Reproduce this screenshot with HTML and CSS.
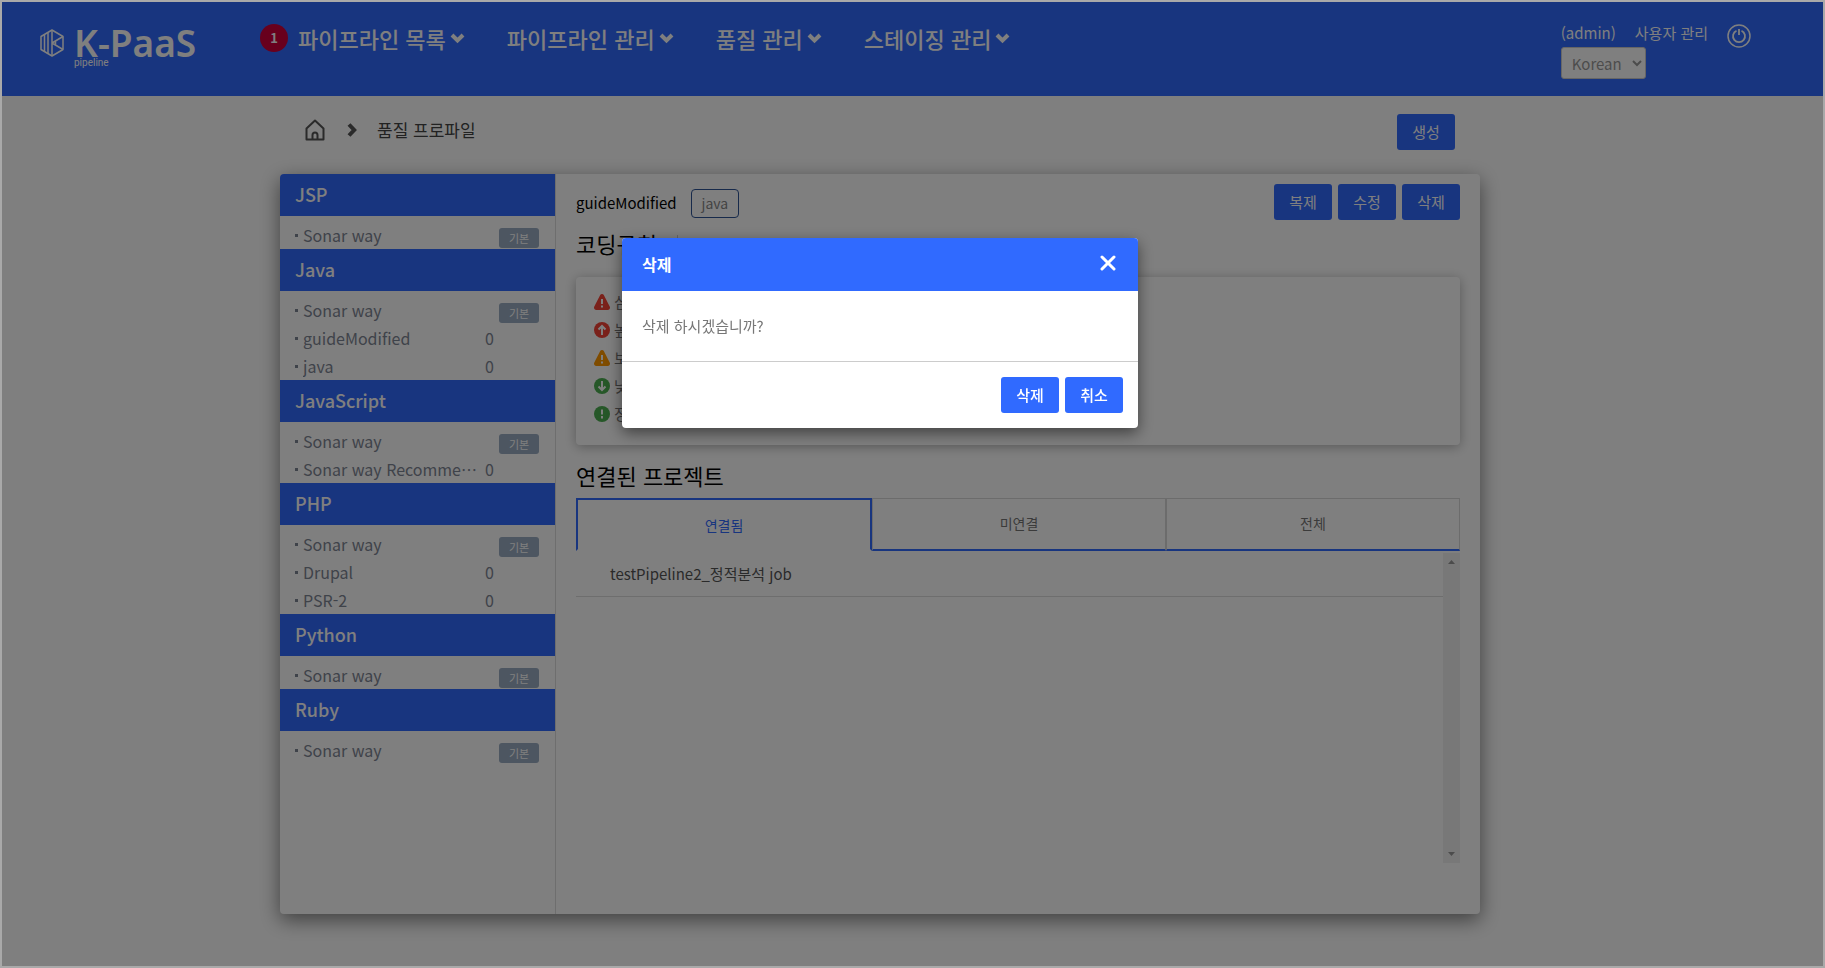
FILE: index.html
```html
<!DOCTYPE html>
<html lang="ko">
<head>
<meta charset="utf-8">
<title>K-PaaS pipeline - 품질 프로파일</title>
<link rel="stylesheet" href="styles.css">
</head>
<body>
<div class="page">
  <header class="header">
    <a class="logo" href="#" aria-label="K-PaaS pipeline">
      <svg class="logo-mark" viewBox="0 0 24 28" fill="none" stroke="currentColor" stroke-width="1.5" stroke-linejoin="round">
        <path d="M12 1 23 7.5v13L12 27 1 20.500v-13z"/>
        <path d="M4.500 5.800v16.600M8 3.800v20.600M12 1v26M12 14 23 7.500M12 14l11 6.500M15.500 12v4"/>
      </svg>
      <span class="logo-text"><span class="logo-name">K-PaaS</span><span class="logo-sub">pipeline</span></span>
    </a>
    <nav class="nav">
      <span class="count">1</span>
      <a class="nav-link" href="#">파이프라인 목록<svg class="caret" viewBox="0 0 15 12"><path d="M2 3 7.500 8.500 13 3"/></svg></a>
      <a class="nav-link" href="#">파이프라인 관리<svg class="caret" viewBox="0 0 15 12"><path d="M2 3 7.500 8.500 13 3"/></svg></a>
      <a class="nav-link" href="#">품질 관리<svg class="caret" viewBox="0 0 15 12"><path d="M2 3 7.500 8.500 13 3"/></svg></a>
      <a class="nav-link" href="#">스테이징 관리<svg class="caret" viewBox="0 0 15 12"><path d="M2 3 7.500 8.500 13 3"/></svg></a>
    </nav>
    <div class="user">
      <div class="user-row">
        <a href="#">(admin)</a>
        <a href="#">사용자 관리</a>
        <button class="power" type="button" aria-label="로그아웃">
          <svg viewBox="0 0 24 24" fill="none" stroke="currentColor" stroke-width="1.500"><circle cx="12" cy="12" r="11"/><path d="M9.500 6.700a6 6 0 1 0 5 0M12 5v6" stroke-width="1.800"/></svg>
        </button>
      </div>
      <select class="lang" aria-label="언어"><option>Korean</option><option>English</option></select>
    </div>
  </header>

  <main class="main">
    <div class="crumbs">
      <nav class="trail" aria-label="현재 위치">
        <a class="home" href="#" aria-label="홈"><svg viewBox="0 0 20 22" fill="none" stroke="currentColor" stroke-width="2"><path d="M1.500 9.500 10 1.500l8.500 8V20.500h-17z" stroke-linejoin="round"/><path d="M7.500 20v-4a2.500 2.500 0 0 1 5 0v4"/></svg></a>
        <svg class="crumb-arrow" viewBox="0 0 10 14"><path d="M2 1.500 7.200 7 2 12.500"/></svg>
        <span class="crumb-text">품질 프로파일</span>
      </nav>
      <button class="btn" type="button">생성</button>
    </div>

    <div class="card">
      <aside class="side">
        <h2>JSP</h2>
        <ul><li><a href="#">Sonar way</a><b>기본</b></li></ul>
        <h2>Java</h2>
        <ul><li><a href="#">Sonar way</a><b>기본</b></li><li><a href="#">guideModified</a><i>0</i></li><li><a href="#">java</a><i>0</i></li></ul>
        <h2>JavaScript</h2>
        <ul><li><a href="#">Sonar way</a><b>기본</b></li><li><a href="#">Sonar way Recommended</a><i>0</i></li></ul>
        <h2>PHP</h2>
        <ul><li><a href="#">Sonar way</a><b>기본</b></li><li><a href="#">Drupal</a><i>0</i></li><li><a href="#">PSR-2</a><i>0</i></li></ul>
        <h2>Python</h2>
        <ul><li><a href="#">Sonar way</a><b>기본</b></li></ul>
        <h2>Ruby</h2>
        <ul><li><a href="#">Sonar way</a><b>기본</b></li></ul>
      </aside>

      <section class="detail">
        <div class="detail-head">
          <span class="profile">guideModified</span>
          <span class="tag">java</span>
          <div class="actions">
            <button class="btn" type="button">복제</button>
            <button class="btn" type="button">수정</button>
            <button class="btn" type="button">삭제</button>
          </div>
        </div>
        <h3 class="rules-title">코딩규칙</h3>
        <ul class="rules">
          <li><svg class="red" viewBox="0 0 16 16"><path d="M8 0c.8 0 1.400.4 1.800 1.100l5.900 11.500c.8 1.600-.1 3.400-1.900 3.400H2.200C.4 16-.5 14.200.3 12.600L6.200 1.100C6.600.4 7.200 0 8 0z"/><path class="mark" d="M8 5v5M8 11.500v2"/></svg>심각</li>
          <li><svg class="red" viewBox="0 0 16 16"><circle cx="8" cy="8" r="8"/><path class="mark" d="M8 13V4M4.500 7.500 8 4l3.500 3.500"/></svg>높음</li>
          <li><svg class="orange" viewBox="0 0 16 16"><path d="M8 0c.8 0 1.400.4 1.800 1.100l5.900 11.500c.8 1.600-.1 3.400-1.900 3.400H2.200C.4 16-.5 14.200.3 12.600L6.200 1.100C6.600.4 7.200 0 8 0z"/><path class="mark" d="M8 5v5M8 11.500v2"/></svg>보통</li>
          <li><svg class="green" viewBox="0 0 16 16"><circle cx="8" cy="8" r="8"/><path class="mark" d="M8 3v9M4.500 8.500 8 12l3.500-3.500"/></svg>낮음</li>
          <li><svg class="green" viewBox="0 0 16 16"><circle cx="8" cy="8" r="8"/><path class="mark" d="M8 3.500v5M8 10v2.500"/></svg>정보</li>
        </ul>
        <h3 class="projects-title">연결된 프로젝트</h3>
        <div class="tabs" role="tablist">
          <button class="tab active" type="button" role="tab" aria-selected="true">연결됨</button>
          <button class="tab" type="button" role="tab" aria-selected="false">미연결</button>
          <button class="tab" type="button" role="tab" aria-selected="false">전체</button>
        </div>
        <div class="projects">
          <ul><li>testPipeline2_정적분석 job</li></ul>
          <div class="scroll"><svg viewBox="0 0 7 4"><path d="M0 4 3.500 0 7 4z"/></svg><svg viewBox="0 0 7 4"><path d="M0 0h7L3.500 4z"/></svg></div>
        </div>
      </section>
    </div>
  </main>
</div>

<div class="overlay">
  <div class="modal" role="dialog" aria-modal="true" aria-labelledby="modal-title">
    <div class="modal-head">
      <h4 id="modal-title">삭제</h4>
      <button class="close" type="button" aria-label="닫기"><svg viewBox="0 0 16 16"><path d="M2 2l12 12M14 2 2 14"/></svg></button>
    </div>
    <p class="modal-body">삭제 하시겠습니까?</p>
    <div class="modal-foot">
      <button class="btn" type="button">삭제</button>
      <button class="btn" type="button">취소</button>
    </div>
  </div>
</div>
</body>
</html>
```
FILE: styles.css
```css
* { box-sizing: border-box; }
body, h2, h3, h4, ul, p { margin: 0; padding: 0; }
ul { list-style: none; }
a { color: inherit; text-decoration: none; }
button, select { font: inherit; }
svg { display: block; flex: none; }

body {
  background: #fff;
  color: #555;
  font-family: "Noto Sans CJK KR", "Noto Sans", sans-serif;
  font-size: 15px;
  line-height: 20px;
}

.page {
  min-height: 100vh;
  border: 2px solid #a9a9a9;
}

/* Header */
.header {
  display: flex;
  height: 94px;
  padding-left: 38px;
  background: #306aff;
  color: #fff;
}
.logo { display: flex; gap: 10px; width: 220px; padding-top: 27px; }
.logo-mark { width: 24px; height: 28px; }
.logo-text { display: flex; flex-direction: column; }
.logo-name { font: 600 37px/27px "Noto Sans", sans-serif; }
.logo-sub { font: 10px/14px Roboto, sans-serif; }
.nav { display: flex; align-items: flex-start; padding-top: 22px; }
.count {
  width: 28px;
  height: 28px;
  margin-right: 10px;
  border-radius: 50%;
  background: #d1003a;
  font-size: 13px;
  font-weight: 700;
  line-height: 28px;
  text-align: center;
}
.nav-link {
  display: flex;
  align-items: center;
  gap: 4px;
  margin-right: 42px;
  font-size: 22px;
  font-weight: 500;
  line-height: 28px;
}
.caret { width: 15px; height: 12px; fill: none; stroke: currentColor; stroke-width: 4; }
.user { margin-left: auto; padding: 22px 72px 0 0; }
.user-row { display: flex; gap: 19px; height: 23px; line-height: 18px; }
.power { width: 24px; height: 24px; padding: 0; border: 0; background: none; color: inherit; }
.lang {
  width: 85px;
  height: 32px;
  padding: 0 6px;
  border: 1px solid #ccc;
  border-radius: 3px;
  background: #fff;
  color: #999;
}

/* Page body */
.main {
  display: grid;
  grid-template-columns: 278fr minmax(0, 1200px) 343fr;
  padding-bottom: 52px;
}
.main > * { grid-column: 2; }
.crumbs { display: flex; align-items: center; height: 78px; padding: 0 25px 6px; }
.trail { display: flex; align-items: center; padding-bottom: 4px; }
.home svg { width: 20px; height: 22px; }
.crumb-arrow { width: 10px; height: 14px; margin: 0 20px 0 22px; fill: none; stroke: #555; stroke-width: 4; }
.crumb-text { font-size: 17px; color: #444; }
.btn {
  min-width: 58px;
  height: 36px;
  padding: 0 14px;
  border: 0;
  border-radius: 3px;
  background: #306aff;
  color: #fff;
  font-size: 15px;
}
.crumbs .btn { margin-left: auto; }

.card {
  display: grid;
  grid-template-columns: 276px minmax(0, 1fr);
  min-height: 740px;
  border-radius: 4px;
  background: #fff;
  box-shadow: 0 6px 20px rgba(0, 0, 0, .5);
}

/* Profile list */
.side { overflow: hidden; border-right: 1px solid #ddd; border-radius: 4px 0 0 4px; }
.side h2 {
  height: 42px;
  padding-left: 15px;
  background: #306aff;
  color: #fff;
  font-size: 18px;
  font-weight: 500;
  line-height: 40px;
}
.side ul { padding-top: 5px; }
.side li {
  display: grid;
  grid-template-columns: 3px 176px 10px 1fr;
  column-gap: 5px;
  align-items: center;
  height: 28px;
  padding: 0 16px 0 15px;
  color: #7e8694;
  font-size: 16px;
}
.side li::before { width: 3px; height: 3px; background: #7e8694; content: ""; }
.side a { overflow: hidden; line-height: 24px; text-overflow: ellipsis; white-space: nowrap; }
.side i { font-style: normal; text-align: right; }
.side b {
  grid-column: 4;
  justify-self: end;
  align-self: end;
  width: 40px;
  height: 20px;
  margin-bottom: 1px;
  border-radius: 3px;
  background: #9aacc2;
  color: #fff;
  font-size: 11px;
  font-weight: 400;
  line-height: 20px;
  text-align: center;
}

/* Profile detail */
.detail { padding: 10px 20px 0; }
.detail-head { display: flex; align-items: flex-start; height: 46px; }
.profile { padding-top: 9px; color: #000; }
.tag {
  height: 29px;
  margin: 5px 0 0 14px;
  padding: 0 10px;
  border: 1px solid #2f5596;
  border-radius: 4px;
  color: #888;
  font-size: 14px;
  line-height: 27px;
}
.actions { display: flex; gap: 6px; margin-left: auto; }
.detail h3 { padding-bottom: 6px; color: #000; font-size: 22px; font-weight: 400; line-height: 26px; }
.rules-title { display: flex; align-items: center; gap: 20px; }
.rules-title::after { width: 1px; height: 16px; background: #ccc; content: ""; }
.rules {
  margin-top: 15px;
  padding: 11px 18px 17px;
  border-radius: 4px;
  box-shadow: 0 2px 12px rgba(0, 0, 0, .3);
}
.rules li { display: flex; align-items: center; gap: 4px; height: 28px; color: #777; }
.rules svg { width: 16px; height: 16px; }
.mark { fill: none; stroke: #fff; stroke-width: 2; }
.red { fill: #f44336; }
.orange { fill: #ff9800; }
.green { fill: #4caf50; }
.projects-title { margin-top: 17px; }
.tabs { display: grid; grid-template-columns: 296fr 294fr 294fr; height: 53px; margin-top: 4px; }
.tab {
  padding: 0 0 2px;
  border: 1px solid #d9d9d9;
  border-bottom: 2px solid #306aff;
  background: none;
  color: #777;
  font-size: 14px;
}
.tab.active { padding: 0; border: 2px solid #306aff; border-bottom-color: transparent; color: #306aff; }
.projects { display: grid; grid-template-columns: 1fr 17px; height: 310px; margin-top: 2px; }
.projects li { height: 44px; padding-left: 34px; border-bottom: 1px solid #ddd; line-height: 42px; }
.scroll { display: flex; flex-direction: column; justify-content: space-between; align-items: center; padding: 7px 0; background: #f1f1f1; }
.scroll svg { width: 7px; height: 4px; fill: #999; }

/* Dialog */
.overlay {
  position: fixed;
  inset: 2px;
  padding: 236px 65px 0 0;
  background: rgba(0, 0, 0, .5);
}
.modal {
  max-width: 516px;
  margin: 0 auto;
  overflow: hidden;
  border-radius: 4px;
  background: #fff;
  box-shadow: 0 5px 15px rgba(0, 0, 0, .5);
}
.modal-head { display: flex; justify-content: space-between; height: 53px; padding: 0 22px 0 20px; background: #306aff; color: #fff; }
.modal-head h4 { font-size: 16px; font-weight: 700; line-height: 53px; }
.close { height: 50px; padding: 0; border: 0; background: none; color: #fff; }
.close svg { width: 16px; height: 16px; stroke: currentColor; stroke-width: 3; stroke-linecap: round; }
.modal-body { padding: 25px 20px; border-bottom: 1px solid #ccc; color: #777; }
.modal-foot { display: flex; justify-content: flex-end; gap: 6px; padding: 15px; }
.modal-foot .btn { font-weight: 500; }
```
